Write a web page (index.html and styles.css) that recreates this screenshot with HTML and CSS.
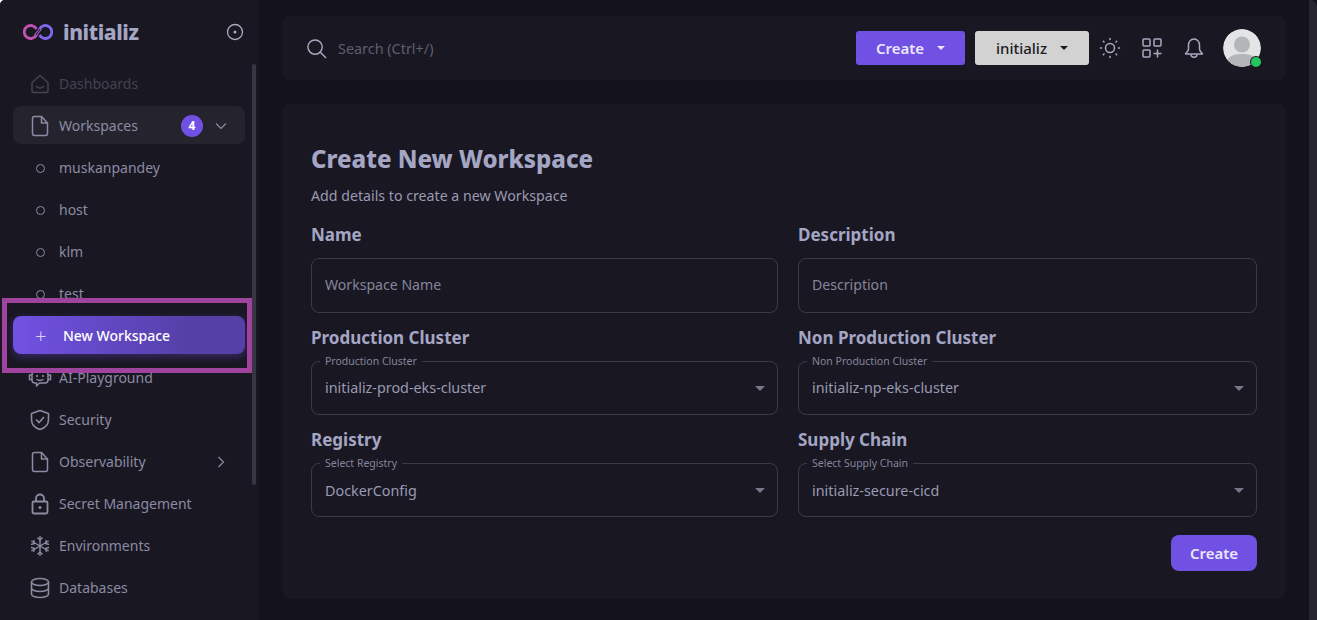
FILE: index.html
```html
<!DOCTYPE html>
<html lang="en">
<head>
  <meta charset="UTF-8" />
  <meta name="viewport" content="width=device-width, initial-scale=1.0"/>
  <title>Create New Workspace - initializ</title>
  <link rel="stylesheet" href="styles.css">
</head>
<body>
  <div class="app">
    <aside class="sidebar">
      <div class="brand">
        <svg class="brand-logo" width="30" height="16" viewBox="0 0 30 16" fill="none">
          <path d="M13.500 5A6.500 6.500 0 1 0 13.500 11" stroke="#c054b0" stroke-width="2.800"/>
          <path d="M16.500 5A6.500 6.500 0 1 1 16.500 11" stroke="#7d69ee" stroke-width="2.800"/>
          <path d="M11.500 11L16 5M14 11L18.500 5" stroke="#a35cc9" stroke-width="1.200"/>
        </svg>
        <span class="brand-name">initializ</span>
        <svg class="brand-toggle" width="18" height="18" viewBox="0 0 18 18" fill="none">
          <circle cx="9" cy="9" r="7.500" stroke="#a9a9c2" stroke-width="1.300"/>
          <circle cx="9" cy="9" r="1.500" fill="#a9a9c2"/>
        </svg>
      </div>

      <nav class="nav">
        <a class="nav-item faded">
          <svg class="nav-icon" viewBox="0 0 24 24" fill="none"><path d="M4 10.500L12 3.500L20 10.500V18.500A2 2 0 0 1 18 20.500H6A2 2 0 0 1 4 18.500Z" stroke="currentColor" stroke-width="1.500" stroke-linejoin="round"/><path d="M8.500 14.500C10.500 16.500 13.500 16.500 15.500 14.500" stroke="currentColor" stroke-width="1.500" stroke-linecap="round"/></svg>
          Dashboards
        </a>
        <a class="nav-item open">
          <svg class="nav-icon" viewBox="0 0 24 24" fill="none"><path d="M4.500 4.500A2 2 0 0 1 6.500 2.500H13.500L19.500 9V19.500A2 2 0 0 1 17.500 21.500H6.500A2 2 0 0 1 4.500 19.500Z" stroke="currentColor" stroke-width="1.500" stroke-linejoin="round"/><path d="M13.500 2.500V9H19.500" stroke="currentColor" stroke-width="1.500" stroke-linejoin="round"/></svg>
          Workspaces
          <span class="badge">4</span>
          <svg class="chevron" width="12" height="12" viewBox="0 0 12 12" fill="none"><path d="M1 3.500L6 8.500L11 3.500" stroke="currentColor" stroke-width="1.200"/></svg>
        </a>
        <a class="nav-item"><span class="sub-dot"></span>muskanpandey</a>
        <a class="nav-item"><span class="sub-dot"></span>host</a>
        <a class="nav-item"><span class="sub-dot"></span>klm</a>
        <a class="nav-item"><span class="sub-dot"></span>test</a>
        <a class="nav-item new-item">
          <span class="plus">+</span>
          New Workspace
        </a>
        <a class="nav-item">
          <svg class="nav-icon" viewBox="0 0 24 24" fill="none"><path d="M12 2.500V5.500" stroke="currentColor" stroke-width="1.500"/><path d="M7 5.500H17A3 3 0 0 1 20 8.500V14A3 3 0 0 1 17 17H11.500L8.500 20V17H7A3 3 0 0 1 4 14V8.500A3 3 0 0 1 7 5.500Z" stroke="currentColor" stroke-width="1.500" stroke-linejoin="round"/><path d="M4 9H1.500V13.500H4M20 9H22.500V13.500H20" stroke="currentColor" stroke-width="1.500"/><circle cx="9" cy="10" r="1.100" fill="currentColor"/><circle cx="15" cy="10" r="1.100" fill="currentColor"/><path d="M9 13.500C10.500 14.800 13.500 14.800 15 13.500" stroke="currentColor" stroke-width="1.300" stroke-linecap="round"/></svg>
          AI-Playground
        </a>
        <a class="nav-item">
          <svg class="nav-icon" viewBox="0 0 24 24" fill="none"><path d="M12 2.500L20.500 5.500V11.500C20.500 16.500 17 20 12 21.500C7 20 3.500 16.500 3.500 11.500V5.500Z" stroke="currentColor" stroke-width="1.600" stroke-linejoin="round"/><path d="M8 11.500L11 14.500L16 9" stroke="currentColor" stroke-width="1.600"/></svg>
          Security
        </a>
        <a class="nav-item">
          <svg class="nav-icon" viewBox="0 0 24 24" fill="none"><path d="M4.500 4.500A2 2 0 0 1 6.500 2.500H13.500L19.500 9V19.500A2 2 0 0 1 17.500 21.500H6.500A2 2 0 0 1 4.500 19.500Z" stroke="currentColor" stroke-width="1.500" stroke-linejoin="round"/><path d="M13.500 2.500V9H19.500" stroke="currentColor" stroke-width="1.500" stroke-linejoin="round"/></svg>
          Observability
          <svg class="chevron chevron-right" width="12" height="12" viewBox="0 0 12 12" fill="none"><path d="M3.500 1L8.500 6L3.500 11" stroke="currentColor" stroke-width="1.200"/></svg>
        </a>
        <a class="nav-item">
          <svg class="nav-icon" viewBox="0 0 24 24" fill="none"><rect x="4.500" y="9.500" width="15" height="12" rx="1.500" stroke="currentColor" stroke-width="1.800"/><path d="M8 9.500V6.500A4 4 0 0 1 16 6.500V9.500" stroke="currentColor" stroke-width="1.800"/><circle cx="12" cy="15.500" r="1.500" fill="currentColor"/></svg>
          Secret Management
        </a>
        <a class="nav-item">
          <svg class="nav-icon" viewBox="0 0 24 24" fill="none" stroke="currentColor" stroke-width="1.400"><path d="M12 2V22M3.300 7L20.700 17M3.300 17L20.700 7"/><path d="M9.500 3.500L12 6L14.500 3.500M9.500 20.500L12 18L14.500 20.500M3 10.500L6.500 9.500L5.500 6M21 10.500L17.500 9.500L18.500 6M3 13.500L6.500 14.500L5.500 18M21 13.500L17.500 14.500L18.500 18"/></svg>
          Environments
        </a>
        <a class="nav-item">
          <svg class="nav-icon" viewBox="0 0 24 24" fill="none"><ellipse cx="12" cy="6" rx="8.500" ry="3.500" stroke="currentColor" stroke-width="1.600"/><path d="M3.500 6V18C3.500 20 7.300 21.500 12 21.500C16.700 21.500 20.500 20 20.500 18V6M3.500 12C3.500 14 7.300 15.500 12 15.500C16.700 15.500 20.500 14 20.500 12" stroke="currentColor" stroke-width="1.600"/></svg>
          Databases
        </a>
      </nav>
      <div class="scroll-thumb"></div>
      <div class="highlight-box"></div>
    </aside>

    <main class="main">
      <header class="topbar">
        <svg class="search-icon" width="21" height="21" viewBox="0 0 22 22" fill="none"><circle cx="9.500" cy="9.500" r="7.500" stroke="#a9a9c2" stroke-width="1.500"/><path d="M15 15L21 21" stroke="#a9a9c2" stroke-width="1.500"/></svg>
        <input class="search-input" type="text" placeholder="Search (Ctrl+/)" />
        <button class="btn btn-create-top">Create <span class="caret"></span></button>
        <button class="btn btn-org">initializ <span class="caret"></span></button>
        <svg class="top-icon" viewBox="0 0 22 22" fill="none" stroke="#a9a9c2" stroke-width="1.500" stroke-linecap="round"><circle cx="11" cy="11" r="4.500"/><path d="M11 1.500V2.500M11 19.500V20.500M1.500 11H2.500M19.500 11H20.500M4.300 4.300L5 5M17 17L17.700 17.700M4.300 17.700L5 17M17 5L17.700 4.300"/></svg>
        <svg class="top-icon" viewBox="0 0 22 22" fill="none" stroke="#a9a9c2" stroke-width="1.500"><rect x="2" y="2" width="7" height="7" rx="1"/><rect x="13" y="2" width="7" height="7" rx="1"/><rect x="2" y="13" width="7" height="7" rx="1"/><path d="M16.500 12.500V20.500M12.500 16.500H20.500"/></svg>
        <svg class="top-icon" viewBox="0 0 22 22" fill="none" stroke="#a9a9c2" stroke-width="1.500"><path d="M11 2C7.500 2 5.500 5 5.500 8V12C5.500 14 4 15 2.500 17H19.500C18 15 16.500 14 16.500 12V8C16.500 5 14.500 2 11 2Z" stroke-linejoin="round"/><path d="M8 17.500C8 21 14 21 14 17.500"/></svg>
        <div class="avatar">
          <svg width="38" height="38" viewBox="0 0 38 38"><circle cx="19" cy="19" r="19" fill="#e3e4e6"/><circle cx="19" cy="15.500" r="8" fill="#b3b6b9"/><path d="M4 31C8 25.500 13 25 19 25C25 25 30 25.500 34 31C30 35.500 25 38 19 38C13 38 8 35.500 4 31Z" fill="#b3b6b9"/></svg>
          <span class="status-dot"></span>
        </div>
      </header>

      <section class="card">
        <h1 class="card-title">Create New Workspace</h1>
        <p class="card-sub">Add details to create a new Workspace</p>

        <form class="form-grid">
          <div class="field">
            <label class="field-label">Name</label>
            <input class="text-box" type="text" placeholder="Workspace Name" />
          </div>
          <div class="field">
            <label class="field-label">Description</label>
            <input class="text-box" type="text" placeholder="Description" />
          </div>
          <div class="field">
            <label class="field-label">Production Cluster</label>
            <div class="select-box">
              <span class="float-label">Production Cluster</span>
              initializ-prod-eks-cluster
              <span class="select-arrow"></span>
            </div>
          </div>
          <div class="field">
            <label class="field-label">Non Production Cluster</label>
            <div class="select-box">
              <span class="float-label">Non Production Cluster</span>
              initializ-np-eks-cluster
              <span class="select-arrow"></span>
            </div>
          </div>
          <div class="field">
            <label class="field-label">Registry</label>
            <div class="select-box">
              <span class="float-label">Select Registry</span>
              DockerConfig
              <span class="select-arrow"></span>
            </div>
          </div>
          <div class="field">
            <label class="field-label">Supply Chain</label>
            <div class="select-box">
              <span class="float-label">Select Supply Chain</span>
              initializ-secure-cicd
              <span class="select-arrow"></span>
            </div>
          </div>
        </form>

        <div class="card-actions">
          <button class="btn btn-submit">Create</button>
        </div>
      </section>
    </main>

    <div class="edge-strip"></div>
  </div>
</body>
</html>
```

FILE: styles.css
```css
* {
  box-sizing: border-box;
}

html, body {
  margin: 0;
  padding: 0;
  height: 100%;
  overflow: hidden;
}

body {
  background: #fff;
  font-family: 'Noto Sans', sans-serif;
  font-size: 14px;
  color: #9a9ab2;
}

.app {
  display: flex;
  height: 620px;
  background: #14121c;
  border-top-left-radius: 5px;
  overflow: hidden;
}

/* Sidebar */
.sidebar {
  position: relative;
  flex: 0 0 259px;
  height: 620px;
  background: #191722;
  overflow: hidden;
}

.brand {
  display: flex;
  align-items: center;
  height: 64px;
  padding: 0 15px 0 23px;
}

.brand-name {
  margin-left: 10px;
  font-size: 21px;
  font-weight: 800;
  letter-spacing: -0.4px;
  color: #a4a6c4;
}

.brand-toggle {
  margin-left: auto;
}

.nav {
  padding: 0 14px 0 13px;
}

.nav-item {
  display: flex;
  align-items: center;
  height: 38px;
  margin-bottom: 4px;
  padding-left: 15px;
  padding-top: 2px;
  border-radius: 8px;
  color: #8b8ba2;
  line-height: 1;
}

.nav-item.faded {
  color: #44434f;
}

.nav-item.open {
  background: #24232e;
}

.nav-icon {
  flex: 0 0 24px;
  width: 24px;
  height: 24px;
  margin-right: 7px;
}

.sub-dot {
  flex: 0 0 9px;
  width: 9px;
  height: 9px;
  margin: 0 14px 0 8px;
  border: 1px solid #8b8ba2;
  border-radius: 50%;
}

.badge {
  display: flex;
  align-items: center;
  justify-content: center;
  width: 22px;
  height: 22px;
  margin-left: auto;
  border-radius: 50%;
  background: #7151e3;
  color: #fff;
  font-size: 12px;
  font-weight: 700;
}

.chevron {
  margin: 0 18px 0 12px;
}

.chevron-right {
  margin-left: auto;
}

.new-item {
  padding-left: 17px;
  background: linear-gradient(90deg, #7151e3 0%, #5540a8 75%, #5540a8 100%);
  box-shadow: 0 3px 8px rgba(113, 81, 227, 0.35);
  color: #fff;
  font-weight: 500;
}

.plus {
  width: 33px;
  padding-left: 5px;
  font-size: 20px;
  font-weight: 300;
  color: #d8d0f8;
}

.scroll-thumb {
  position: absolute;
  top: 64px;
  left: 252px;
  width: 4px;
  height: 421px;
  border-radius: 2px;
  background: #383644;
}

.highlight-box {
  position: absolute;
  top: 298px;
  left: 2px;
  width: 250px;
  height: 75px;
  border: 5px solid #a0439f;
}

/* Main */
.main {
  flex: 1;
  min-width: 0;
  padding: 16px 23px 0;
}

.topbar {
  display: flex;
  align-items: center;
  height: 64px;
  padding: 0 25px 0 24px;
  border-radius: 8px;
  background: #191722;
}

.search-icon {
  margin-right: 11px;
}

.search-input {
  flex: 1;
  min-width: 0;
  border: none;
  outline: none;
  background: transparent;
  font: inherit;
  font-size: 14.400px;
  padding: 0;
  color: #5f5e70;
}

.search-input::placeholder {
  color: #5f5e70;
  opacity: 1;
}

.btn {
  border: none;
  font-family: inherit;
  font-size: 15px;
  cursor: pointer;
}

.btn-create-top {
  display: flex;
  align-items: center;
  justify-content: center;
  gap: 13px;
  width: 109px;
  height: 34px;
  border-radius: 3px;
  background: #7151e3;
  color: #ebe6fc;
  font-weight: 600;
}

.btn-org {
  display: flex;
  align-items: center;
  justify-content: center;
  gap: 13px;
  width: 114px;
  height: 34px;
  margin-left: 10px;
  border-radius: 3px;
  background: #d2d2d2;
  color: #1c1b22;
  font-weight: 500;
}

.caret {
  width: 0;
  height: 0;
  border-left: 4px solid transparent;
  border-right: 4px solid transparent;
  border-top: 4px solid currentColor;
}

.top-icon {
  width: 22px;
  height: 22px;
  margin-left: 20px;
}

.btn-org + .top-icon {
  margin-left: 10px;
}

.avatar {
  position: relative;
  width: 38px;
  height: 38px;
  margin-left: 18px;
}

.avatar svg {
  display: block;
  border-radius: 50%;
}

.status-dot {
  position: absolute;
  right: 0;
  bottom: 0;
  width: 10px;
  height: 10px;
  border-radius: 50%;
  background: #22c55e;
  box-shadow: 0 0 0 1px #191722;
}

.card {
  height: 495px;
  margin-top: 24px;
  padding: 38px 29px 0;
  border-radius: 8px;
  background: #191722;
}

.card-title {
  margin: 0;
  font-size: 24px;
  line-height: 34px;
  font-weight: 800;
  color: #a4a6c4;
}

.card-sub {
  margin: 10px 0 0;
  font-size: 14.200px;
  line-height: 20px;
  color: #9a9ab2;
}

.form-grid {
  display: grid;
  grid-template-columns: 467px 1fr;
  column-gap: 20px;
  margin-top: 18px;
}

.field {
  display: flex;
  flex-direction: column;
  height: 102.500px;
}

.field-label {
  font-size: 17px;
  line-height: 22px;
  font-weight: 700;
  color: #a4a6c4;
  margin-bottom: 12px;
}

.text-box, .select-box {
  width: 100%;
  height: 54px;
  padding: 0 13px;
  border: 1px solid #3c3a47;
  border-radius: 8px;
  background: transparent;
  font: inherit;
  font-size: 14.350px;
  color: #9a9ab2;
  outline: none;
}

.text-box {
  height: 55px;
  padding-bottom: 2px;
  font-size: 14.100px;
}

.text-box::placeholder {
  color: #85859a;
  opacity: 1;
}

.select-box {
  position: relative;
  display: flex;
  align-items: center;
}

.float-label {
  position: absolute;
  top: -7px;
  left: 8px;
  padding: 0 5px;
  background: #191722;
  font-size: 10.500px;
  line-height: 13px;
  color: #85859b;
}

.select-arrow {
  position: absolute;
  right: 12px;
  top: 24px;
  border-left: 5px solid transparent;
  border-right: 5px solid transparent;
  border-top: 5px solid #77778c;
}

.card-actions {
  display: flex;
  justify-content: flex-end;
  margin-top: 3px;
}

.btn-submit {
  width: 86px;
  height: 36px;
  border-radius: 8px;
  background: #7151e3;
  color: #ebe6fc;
  font-weight: 600;
}

.edge-strip {
  flex: 0 0 8px;
  background: #272631;
  border-top-right-radius: 7px;
}
```
